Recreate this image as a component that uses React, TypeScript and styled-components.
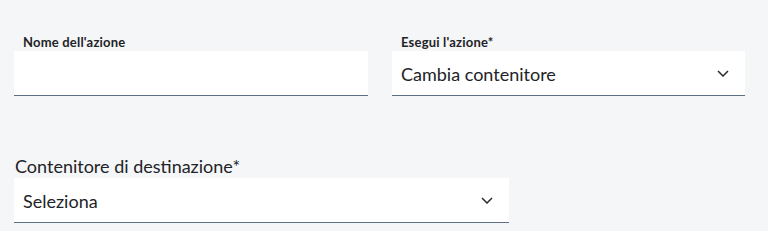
import React from "react";
import styled, { createGlobalStyle } from "styled-components";

const Global = createGlobalStyle`
  html, body { margin: 0; padding: 0; background: #f5f6f8; }
  body { font-family: Lato, "Noto Sans", sans-serif; color: #222326; }
`;

const Page = styled.div`
  width: 768px;
  height: 231px;
  box-sizing: border-box;
  padding: 33px 23px 0 14px;
  display: flex;
  flex-direction: column;
  gap: 60px;
`;

const Row = styled.div`
  display: grid;
  grid-template-columns: 354px 353px;
  column-gap: 24px;
`;

const Field = styled.div<{ $width?: number }>`
  display: flex;
  flex-direction: column;
  width: ${(p) => (p.$width ? `${p.$width}px` : "auto")};
`;

const SmallLabel = styled.label`
  font-size: 13px;
  font-weight: 700;
  line-height: 18px;
  padding-left: 9px;
  letter-spacing: 0.2px;
  color: #222326;
`;

const BigLabel = styled.label`
  font-size: 18px;
  font-weight: 400;
  line-height: 20px;
  padding-left: 1px;
  color: #222326;
  margin-bottom: 2px;
`;

const Box = styled.div`
  height: 45px;
  box-sizing: border-box;
  background: #ffffff;
  border-bottom: 1px solid #5c6f82;
  display: flex;
  align-items: center;
  justify-content: space-between;
  padding: 1px 16px 0 9px;
  font-size: 18px;
  color: #222326;
`;

const Chevron = () => (
  <svg width="12" height="7" viewBox="0 0 12 7" fill="none">
    <path d="M1 1l5 5 5-5" stroke="#2b2b2b" strokeWidth="1.5" />
  </svg>
);

export default function App() {
  return (
    <>
      <Global />
      <Page>
        <Row>
          <Field>
            <SmallLabel>Nome dell'azione</SmallLabel>
            <Box />
          </Field>
          <Field>
            <SmallLabel>Esegui l'azione*</SmallLabel>
            <Box>
              <span>Cambia contenitore</span>
              <Chevron />
            </Box>
          </Field>
        </Row>
        <Field $width={495}>
          <BigLabel>Contenitore di destinazione*</BigLabel>
          <Box>
            <span>Seleziona</span>
            <Chevron />
          </Box>
        </Field>
      </Page>
    </>
  );
}
